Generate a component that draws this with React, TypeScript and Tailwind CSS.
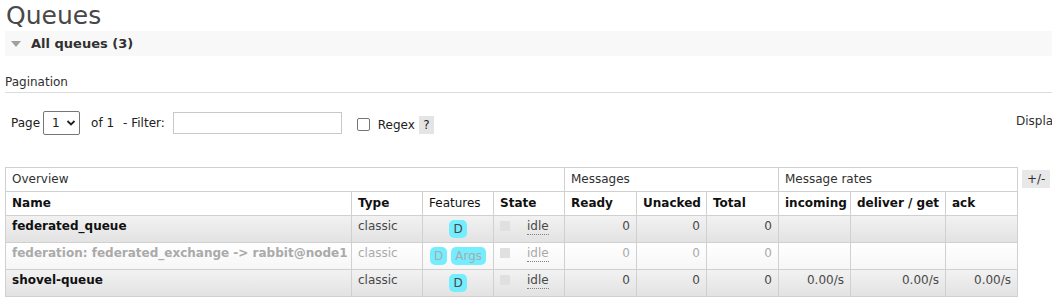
const rows = [
  { name: 'federated_queue', features: ['D'], ready: '0', unacked: '0', total: '0', rates: ['', '', ''], alt: true, dim: false },
  { name: 'federation: federated_exchange -> rabbit@node1', features: ['D', 'Args'], ready: '0', unacked: '0', total: '0', rates: ['', '', ''], alt: false, dim: true },
  { name: 'shovel-queue', features: ['D'], ready: '0', unacked: '0', total: '0', rates: ['0.00/s', '0.00/s', '0.00/s'], alt: true, dim: false },
];

export default function App() {
  const base = 'border border-[#d0d0d0] px-[6px] whitespace-nowrap overflow-hidden';
  const cell = `${base} align-top`;
  const head = `${base} align-middle text-left`;
  return (
    <div className="w-[1052px] h-[306px] overflow-hidden bg-white text-[13px] text-[#484848]" style={{ fontFamily: '"DejaVu Sans", Verdana, sans-serif' }}>
      <div className="pl-[5px]">
        <h1 className="pl-[1px] text-[25px] leading-[31px] text-[#484848]">Queues</h1>

        {/* Section toggle */}
        <div className="h-[25px] bg-[#f8f8f8] flex items-center">
          <span className="ml-[6px] w-0 h-0 border-l-[5px] border-r-[5px] border-t-[6px] border-l-transparent border-r-transparent border-t-[#a0a0a0]" />
          <span className="ml-[10px] font-bold text-[#303030]">All queues (3)</span>
        </div>

        {/* Pagination */}
        <div className="mt-[19px] pb-[2px] leading-[15px] border-b border-[#dcdcdc] text-[12px] text-[#303030]">Pagination</div>

        <div className="mt-[18px] flex items-start">
          <div className="w-[1011px] shrink-0 flex items-center text-[12px] text-[#202020]">
            <span className="ml-[6px]">Page</span>
            <div className="ml-[3px] w-[37px] h-[24px] border border-[#767676] rounded-[2px] flex items-center pl-[8px] gap-[6px]">
              <span>1</span>
              <svg width="10" height="8" viewBox="0 0 10 8"><path d="M1.5 2l3.5 3.5L8.5 2" fill="none" stroke="#202020" strokeWidth="1.8" /></svg>
            </div>
            <span className="ml-[11px]">of 1</span>
            <span className="ml-[9px]">- Filter:</span>
            <div className="ml-[8px] w-[169px] h-[22px] border border-[#c8c8c8]" />
            <div className="ml-[15px] w-[13px] h-[13px] border border-[#767676] rounded-[2px] mt-[2px]" />
            <span className="ml-[8px] mt-[3px]">Regex</span>
            <span className="ml-[4px] mt-[4px] w-[15px] h-[18px] bg-[#e4e4e4] flex items-center justify-center">?</span>
          </div>
          <span className="whitespace-nowrap text-[12px] text-[#303030] mt-[1px]">Displaying 3 items , page size up to:</span>
        </div>

        {/* Table */}
        <div className="mt-[32px] flex items-start">
          <table className="w-[1012px] table-fixed border-collapse text-[12px] leading-[15px]">
            <colgroup>
              <col className="w-[346px]" />
              <col className="w-[71px]" />
              <col className="w-[71px]" />
              <col className="w-[71px]" />
              <col className="w-[72px]" />
              <col className="w-[70px]" />
              <col className="w-[72px]" />
              <col className="w-[72px]" />
              <col className="w-[95px]" />
              <col className="w-[72px]" />
            </colgroup>
            <thead>
              <tr className="h-[24px]">
                <th colSpan={4} className={`${head} font-normal text-[#303030]`}>Overview</th>
                <th colSpan={3} className={`${head} font-normal text-[#303030]`}>Messages</th>
                <th colSpan={3} className={`${head} font-normal text-[#303030]`}>Message rates</th>
              </tr>
              <tr className="h-[24px] text-[#101010]">
                <th className={head}>Name</th>
                <th className={head}>Type</th>
                <th className={`${head} font-normal`}>Features</th>
                <th className={head}>State</th>
                <th className={head}>Ready</th>
                <th className={head}>Unacked</th>
                <th className={head}>Total</th>
                <th className={head}>incoming</th>
                <th className={head}>deliver / get</th>
                <th className={head}>ack</th>
              </tr>
            </thead>
            <tbody>
              {rows.map((r) => (
                <tr
                  key={r.name}
                  className={`h-[27px] ${r.alt ? 'bg-gradient-to-b from-[#f2f2f2] to-[#e2e2e2]' : 'bg-gradient-to-b from-white to-[#f6f6f6]'} ${r.dim ? 'text-[#aaaaaa]' : 'text-[#484848]'}`}
                >
                  <td className={`${cell} pt-[3px] font-bold ${r.dim ? 'text-[#aaaaaa]' : 'text-[#101010]'}`}>{r.name}</td>
                  <td className={`${cell} pt-[3px]`}>classic</td>
                  <td className={`${cell} pt-[4px] pb-0`}>
                    <div className="flex justify-center gap-[4px]">
                      {r.features.map((f) => (
                        <span key={f} className="px-[4px] h-[18px] leading-[18px] rounded-[5px] bg-[#74eeff]">{f}</span>
                      ))}
                    </div>
                  </td>
                  <td className={`${cell} pt-[3px]`}>
                    <div className="flex items-start">
                      <span className="mt-[2px] w-[10px] h-[10px] bg-[#e0e0e0]" />
                      <span className="ml-[17px] border-b border-dotted border-[#808080] leading-[15px]">idle</span>
                    </div>
                  </td>
                  <td className={`${cell} pt-[3px] text-right`}>{r.ready}</td>
                  <td className={`${cell} pt-[3px] text-right`}>{r.unacked}</td>
                  <td className={`${cell} pt-[3px] text-right`}>{r.total}</td>
                  {r.rates.map((v, i) => (
                    <td key={i} className={`${cell} pt-[3px] text-right`}>{v}</td>
                  ))}
                </tr>
              ))}
            </tbody>
          </table>
          <span className="ml-[4px] mt-[3px] px-[5px] h-[18px] leading-[18px] bg-[#e8e8e8] text-[12px] text-[#303030]">+/-</span>
        </div>
      </div>
    </div>
  );
}
